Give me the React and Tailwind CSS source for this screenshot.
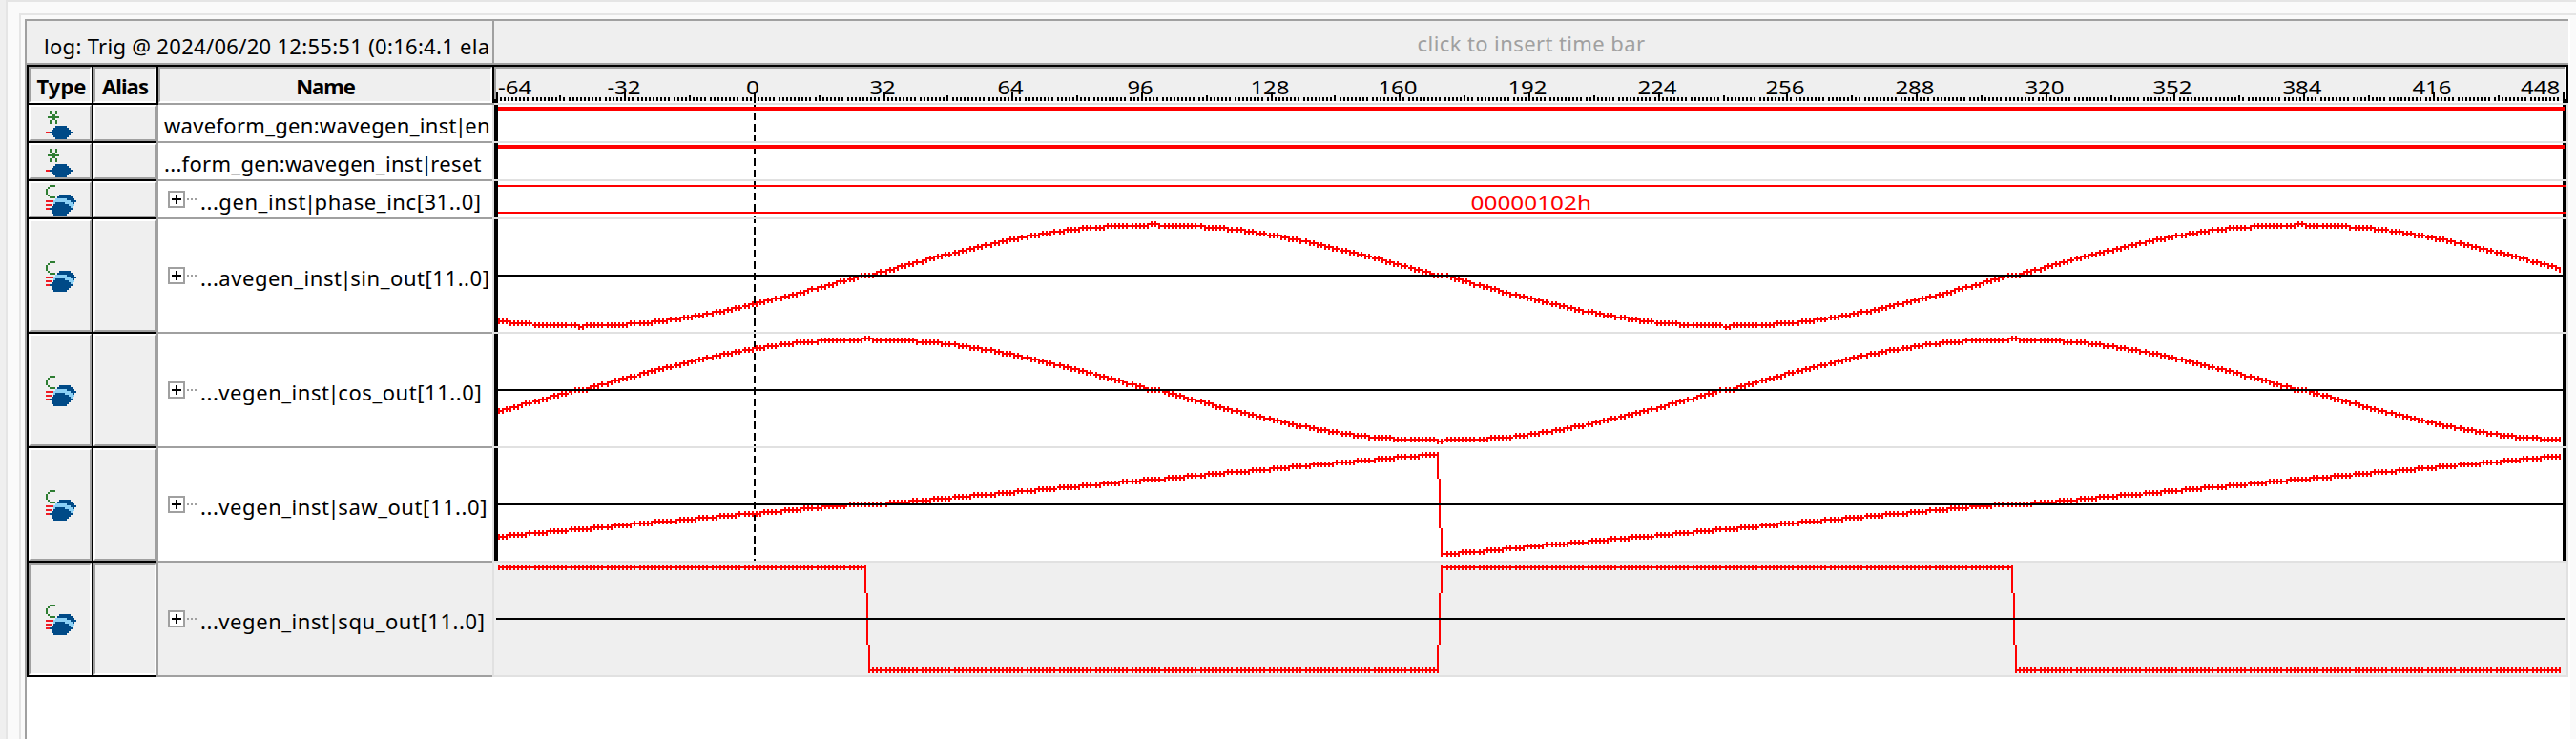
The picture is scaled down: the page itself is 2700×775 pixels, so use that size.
import React from "react";

const FONT = "font-['Noto_Sans','Open_Sans',sans-serif]";
const RED = "#ff0000";
const LINE = "#e1e1e1";
const SAMPLES = 512;
const PERIOD = 284;
const CENTER = 91.5;

// Horizontal position of a sample, in half-resolution units
const tickX = (i) => Math.floor(260 + (i * 1083) / 512);

const wave = {
  sin: (i) => 1.0002 * Math.sin((2 * Math.PI * (i - CENTER)) / PERIOD),
  cos: (i) => 1.0002 * Math.cos((2 * Math.PI * (i - CENTER)) / PERIOD),
  saw: (i) => {
    const p = (((i - CENTER + PERIOD / 2) % PERIOD) + PERIOD) % PERIOD;
    return (2 * p) / PERIOD - 1;
  },
  squ: (i) => {
    const p = (((i - CENTER) % PERIOD) + PERIOD) % PERIOD;
    return p < PERIOD / 2 ? -1 : 1;
  },
};

const box = (x, y, w, h) => `M${x} ${y}h${w}v${h}h${-w}z`;

function wavePath(kind, mid) {
  const pts = [];
  for (let i = 0; i < SAMPLES; i++) {
    pts.push([tickX(i) + 1, mid - Math.trunc(27 * wave[kind](i))]);
  }
  let d = "";
  pts.forEach(([x, y], i) => {
    d += box(x, y - 1, 1, 3);
    if (i === pts.length - 1) return;
    const [nx, ny] = pts[i + 1];
    const dy = ny - y;
    if (Math.abs(dy) > 3) {
      const a = Math.round(y + dy / 4);
      const b = Math.round(y + (3 * dy) / 4);
      const seg = (sx, p, q) => box(sx, Math.min(p, q), 1, Math.abs(p - q));
      d += seg(x, y, a) + seg(x + 1, a, b) + seg(nx, b, ny);
    } else if (nx - x === 2) {
      d += box(x + 1, Math.floor((y + ny) / 2), 1, 1);
    } else {
      d += box(x + 1, y, 1, 1) + box(x + 2, ny, 1, 1);
    }
  });
  return d;
}

const SIGNALS = [
  { name: "waveform_gen:wavegen_inst|en", kind: "high", top: 55, h: 20 },
  { name: "...form_gen:wavegen_inst|reset", kind: "high", top: 75, h: 20 },
  { name: "...gen_inst|phase_inc[31..0]", kind: "bus", top: 95, h: 20 },
  { name: "...avegen_inst|sin_out[11..0]", kind: "sin", top: 115, h: 60 },
  { name: "...vegen_inst|cos_out[11..0]", kind: "cos", top: 175, h: 60 },
  { name: "...vegen_inst|saw_out[11..0]", kind: "saw", top: 235, h: 60 },
  { name: "...vegen_inst|squ_out[11..0]", kind: "squ", top: 295, h: 60, active: true },
];

function PinIcon() {
  return (
    <svg width="32" height="32" viewBox="0 0 16 16" shapeRendering="crispEdges">
      <path fill="#2e7d32" d="M2 0h1v2h-1zM5 0h1v2h-1zM3 2h2v3h-2zM1 3h6v1h-6zM2 5h1v2h-1zM5 5h1v2h-1z" />
      <path fill="#ee1c25" d="M0 11h2v1h-2z" />
      <path fill="#004a87" d="M5 8h6v1h-6zM4 9h8v1h-8zM3 10h10v1h-10zM2 11h12v1h-12zM3 12h10v1h-10zM4 13h8v1h-8zM5 14h6v1h-6z" />
    </svg>
  );
}

function BusIcon() {
  return (
    <svg width="32" height="32" viewBox="0 0 16 16" shapeRendering="crispEdges">
      <path fill="#2e7d32" d="M2 0h3v1h-3zM1 1h1v1h-1zM0 2h1v3h-1zM1 5h1v1h-1zM2 6h3v1h-3z" />
      <path fill="#ee1c25" d="M0 8h4v1h-4zM0 10h3v1h-3zM0 12h3v1h-3z" />
      <path fill="#8bd0f5" d="M5 7h9v1h-9zM4 8h10v1h-10zM4 9h10v1h-10zM11 10h4v1h-4zM12 11h2v1h-2z" />
      <path
        fill="#004a87"
        d="M7 5h6v1h-6zM6 6h8v1h-8zM11 7h4v1h-4zM13 8h3v1h-3zM14 9h1v1h-1zM5 9h5v1h-5zM4 10h8v1h-8zM3 11h10v1h-10zM2 12h12v1h-12zM3 13h10v1h-10zM3 14h9v1h-9zM4 15h7v1h-7z"
      />
    </svg>
  );
}

function Cell({ width, sunken, children }) {
  const edge = sunken
    ? "border-t-[#a0a0a0] border-l-[#a0a0a0] border-b-white border-r-white"
    : "border-t-white border-l-white border-b-[#a0a0a0] border-r-[#a0a0a0]";
  return (
    <div className={`${width} ${edge} shrink-0 self-stretch border-2 bg-[#efefef] flex items-center justify-center overflow-hidden`}>
      {children}
    </div>
  );
}

function HeaderCell({ width, text, children }) {
  return (
    <div className={`${width} h-[38px] shrink-0 border-r-2 border-black flex`}>
      <div className="flex-1 min-w-0 border-2 border-t-[#a0a0a0] border-l-[#a0a0a0] border-b-white border-r-white bg-[#efefef] flex justify-center">
        <span className={`${FONT} ${text} text-[22px] leading-[37px] font-bold text-black whitespace-pre`}>{children}</span>
      </div>
    </div>
  );
}

function Expander() {
  return (
    <svg className="shrink-0" width="34" height="18" viewBox="0 0 17 9" shapeRendering="crispEdges">
      <path fill="#a0a0a0" d="M0 0h9v9h-9zM10 4h1v1h-1zM12 4h1v1h-1zM14 4h1v1h-1z" />
      <path fill="#fff" d="M1 1h7v7h-7z" />
      <path fill="#000" d="M2 4h5v1h-5zM4 2h1v5h-1z" />
    </svg>
  );
}

function Ruler() {
  let d = "";
  for (let i = 0; i <= SAMPLES; i++) {
    const x = tickX(i);
    d += i % 32 === 0 ? box(x, 48, 1, 5) : i % 16 === 0 ? box(x, 50, 1, 3) : box(x, 51, 1, 2);
  }
  const labels = [];
  for (let n = -64; n <= 448; n += 32) {
    const x = tickX(n + 64) + 0.5;
    const len = { 1: 7, 2: 13.6, 3: 20.6 }[String(Math.abs(n)).length] + (n < 0 ? 4 : 0);
    const start = n === -64 ? 261 : n === 448 ? 1321 : x - len / 2 - (n < 0 ? 0.5 : 1);
    labels.push(
      <text key={n} x={start} y="49.5" fontSize="10.2" textLength={len} lengthAdjust="spacingAndGlyphs" className={FONT}>
        {n}
      </text>
    );
  }
  return (
    <svg className="shrink-0" width="2174" height="40" viewBox="259 35 1087 20" shapeRendering="crispEdges">
      <rect x="259" y="35" width="1087" height="20" fill="#efefef" />
      <path fill="#a0a0a0" d="M259 35h1086v1h-1086zM259 35h1v17h-1z" />
      <path fill="#fff" d="M260 53h1083v1h-1083zM1344 35h1v17h-1z" />
      <path fill={LINE} d="M259 54h1087v1h-1087z" />
      <path fill="#000" d="M259 52h2v2h-2zM1343 52h3v2h-3zM1345 34h1v20h-1zM395 53h1v1h-1z" />
      <path fill="#000" d={d} />
      {labels}
    </svg>
  );
}

function Trace({ kind, top, h, active }) {
  const bottom = top + h - 1;
  const mid = top + 29;
  const dashes = [];
  for (let y = 53; y < bottom; y += 6) {
    if (y + 4 > top) {
      const from = Math.max(y, top);
      dashes.push(box(395, from, 1, Math.min(y + 4, bottom) - from));
    }
  }
  const analog = kind in wave;
  return (
    <svg className="shrink-0" width="2176" height={h * 2} viewBox={`258 ${top} 1088 ${h}`} shapeRendering="crispEdges">
      <rect x="258" y={top} width="1088" height={h} fill={LINE} />
      <rect x="259" y={top} width="1086" height={h - 1} fill={active ? "#efefef" : "#fff"} />
      {!active && (
        <path fill="#000" d={box(259, top, 2, h - 1) + box(1343, top, 2, h - 1) + dashes.join("")} />
      )}
      {kind === "high" && <rect x="261" y={top + 1} width="1083" height="2" fill={RED} />}
      {kind === "bus" && (
        <>
          <path fill={RED} d={box(261, top + 2, 1084, 1) + box(261, top + 16, 1084, 1)} />
          <text x="770.8" y={top + 15} fontSize="10" fill={RED} textLength="63.2" lengthAdjust="spacingAndGlyphs" className={FONT}>
            00000102h
          </text>
        </>
      )}
      {analog && <path fill={RED} d={wavePath(kind, mid)} />}
      {analog && <rect x="260" y={mid} width="1084" height="1" fill="#000" />}
    </svg>
  );
}

function SignalRow({ signal }) {
  const { name, kind, top, h, active } = signal;
  const grouped = kind !== "high";
  const height = h === 20 ? "h-[40px]" : "h-[120px]";
  const [scope, port] = name.split("|");
  return (
    <div className={`flex ${height}`}>
      <div className="flex w-[134px] shrink-0 border-b-2 border-black">
        <Cell width="w-[66px]" sunken={active}>
          <div className={`flex shrink-0 pl-[2px] ${grouped ? "pt-[2px]" : "pt-[6px]"}`}>
            {grouped ? <BusIcon /> : <PinIcon />}
          </div>
        </Cell>
        <div className="w-[2px] bg-black" />
        <Cell width="w-[66px]" sunken={active} />
      </div>
      <div
        className={`w-[352px] shrink-0 border-l-2 border-b-2 border-[#a0a0a0] flex items-center overflow-hidden ${active ? "bg-[#efefef]" : "bg-white"}`}
      >
        <div className={`flex items-center ${grouped ? "pl-[10px]" : "pl-[6px]"}`}>
          {grouped && <Expander />}
          <span
            className={`${FONT} ${grouped ? "tracking-[0.56px]" : "tracking-[0.3px]"} pt-[3px] text-[22px] leading-[30px] text-black whitespace-pre`}
          >
            {scope}
            <span className="-mx-[2px]">|</span>
            {port}
          </span>
        </div>
      </div>
      <Trace kind={kind} top={top} h={h} active={active} />
    </div>
  );
}

export default function App() {
  return (
    <div className="w-[2700px] h-[775px] bg-[#efefef] pl-[6px] flex overflow-hidden">
      <div className="flex-1 border-l-2 border-t-2 border-[#e5e5e5] bg-[#fafafa] pl-[12px] pt-[12px] flex">
        <div className="flex-1 border-l-2 border-t-2 border-[#e5e5e5] pl-[4px] pt-[4px] flex">
          <div className="w-[2668px] bg-white border-l-2 border-[#a0a0a0]">
            <div className="w-[2664px] h-[48px] flex border-y-2 border-[#a0a0a0] bg-[#efefef]">
              <div className="w-[490px] shrink-0 border-r-2 border-[#a0a0a0] pl-[18px] pt-[11px]">
                <span className={`${FONT} text-[22px] leading-[30px] tracking-[0.3px] text-black whitespace-pre`}>
                  log: Trig @ 2024/06/20 12:55:51 (0:16:4.1 ela
                </span>
              </div>
              <div className="flex-1 flex justify-center pt-[8px]">
                <span className={`${FONT} text-[22px] leading-[30px] tracking-[0.4px] text-[#a0a0a0] whitespace-pre`}>
                  click to insert time bar
                </span>
              </div>
            </div>
            <div className="w-[2664px] border-l-2 border-black">
              <div className="flex h-[42px] border-t-2 border-black">
                <div className="flex h-[40px] shrink-0">
                  <div className="flex h-[40px] w-[136px] shrink-0 border-b-2 border-black">
                    <HeaderCell width="w-[68px]" text="pl-[3px]">Type</HeaderCell>
                    <HeaderCell width="w-[68px]" text="tracking-[-0.9px]">Alias</HeaderCell>
                  </div>
                  <div className="flex h-[40px] border-b-2 border-[#a0a0a0]">
                    <HeaderCell width="w-[352px]" text="tracking-[-1px]">Name</HeaderCell>
                  </div>
                </div>
                <Ruler />
              </div>
              {SIGNALS.map((s) => (
                <SignalRow key={s.name} signal={s} />
              ))}
            </div>
          </div>
        </div>
      </div>
    </div>
  );
}
